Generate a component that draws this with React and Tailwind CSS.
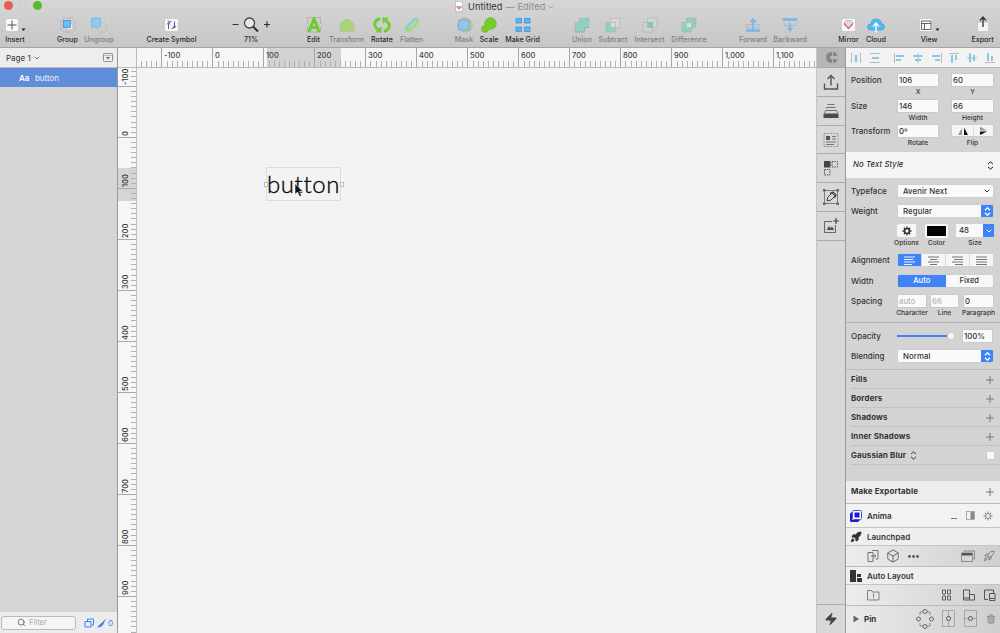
import { ChevronDown, Search, Plus, Rocket, Box, Zap, Trash2 } from "lucide-react";

const blue = "#3b82f0";

function Icon({ w = 16, h = 16, className = "", children }) {
    return <svg width={w} height={h} viewBox={`0 0 ${w} ${h}`} fill="none" className={`block shrink-0 ${className}`}>{children}</svg>
}

function Gear({ thin }) {
    return <Icon w={10} h={10}>
        <circle cx="5" cy="5" r="2.4" stroke="currentColor" strokeWidth={thin ? 0.9 : 1.5} />
        <path d="M5 .5v2M5 7.500v2M.5 5h2M7.500 5h2M1.800 1.800l1.400 1.400M6.800 6.800l1.400 1.400M8.200 1.800L6.800 3.200M3.200 6.800L1.800 8.200" stroke="currentColor" strokeWidth={thin ? 1 : 1.3} />
    </Icon>
}

function Tool({ label, className, dim, children }) {
    return <div className={`flex flex-col items-center shrink-0 whitespace-nowrap text-[7.1px] leading-[10px] font-medium ${dim ? "text-[#808080]" : "text-[#2a2a2a]"} ${className}`}>
        <div className="h-[18px] flex items-center justify-center">{children}</div>
        <div className="mt-[1px]">{label}</div>
    </div>
}

function Tile({ children }) {
    return <Icon w={15} h={16}>
        <rect x="0.5" y="1.5" width="14" height="13" rx="1.5" fill="#f7f7f7" stroke="#bdbdbd" strokeWidth=".6" />
        {children}
    </Icon>
}

// teal shape pairs used by the four boolean operations
function BoolIcon({ a, b, mid, union }) {
    return <Icon>
        <rect x="5.5" y="1" width="9.500" height="9.500" fill={b} stroke="#a9b3b0" strokeWidth=".6" />
        <rect x="1" y="5.5" width="9.500" height="9.500" fill={a} stroke="#a9b3b0" strokeWidth=".6" />
        <rect x="5.5" y="5.5" width="5" height="5" fill={mid} stroke={union ? "none" : "#a9b3b0"} strokeWidth=".5" />
        {union && <path d="M1 15h9.500v-4.500h4.500" stroke="#8fa9c4" strokeWidth=".8" />}
    </Icon>
}

function Toolbar() {
    return <div className="h-12 w-full bg-gradient-to-b from-[#d6d6d6] to-[#c6c6c6] border-b border-[#a5a5a5] flex flex-col overflow-hidden">
        <div className="h-4 flex items-start">
            <div className="flex w-[456px] pt-[1px] pl-[4px] gap-[5.500px]">
                <div className="size-[9px] rounded-full bg-[#e85c56]" />
                <div className="size-[9px] rounded-full border border-[#cacaca]" />
                <div className="size-[9px] rounded-full bg-[#55bd2e]" />
            </div>
            <div className="flex items-center h-[13px] text-[9.2px] text-[#333] whitespace-nowrap">
                <Icon w={8} h={11} className="-ml-[1px] mr-[5px]"><path d="M.5 .5h5l2 2v8h-7z" fill="#fff" stroke="#aaa" strokeWidth=".6" /><path d="M2 5h4l1 1-3 3-3-3z" fill="#c99" /></Icon>
                <span className="tracking-[0.1px]">Untitled</span>
                <span className="text-[#8b8b8b] ml-[3px] tracking-[0.1px]">— Edited</span>
                <ChevronDown size={8} className="ml-[2px] text-[#888]" />
            </div>
        </div>
        <div className="flex h-[30px]">
            <Tool label="Insert" className="w-[20px] ml-[5px]">
                <Icon w={26} h={16}>
                    <rect x="3.5" y="1.5" width="13" height="13" rx="2" fill="#f8f8f8" stroke="#bbb" strokeWidth=".6" />
                    <path d="M5.500 8h9M10 3.500v9" stroke="#555" />
                    <path d="M19.500 11.500h4l-2 2.500z" fill="#222" />
                </Icon>
            </Tool>
            <Tool label="Group" className="w-[21px] ml-[32px]">
                <Icon>
                    <rect x="1" y="1" width="14" height="14" stroke="#aaa" strokeWidth=".6" />
                    <rect x="6.500" y="6.500" width="6" height="6" fill="#eee" stroke="#bbb" strokeWidth=".6" />
                    <rect x="3.500" y="3.500" width="7" height="7" fill="#5ec1f7" stroke="#4188c9" strokeWidth=".7" />
                    <path d="M0 0h2v2H0zM14 0h2v2h-2zM0 14h2v2H0zM14 14h2v2h-2z" fill="#f4f4f4" stroke="#999" strokeWidth=".3" />
                </Icon>
            </Tool>
            <Tool label="Ungroup" dim className="w-[30px] ml-[6px]">
                <Icon className="-ml-[1px]">
                    <rect x="6" y="6" width="9" height="9" stroke="#aaa" strokeDasharray="2 1" strokeWidth=".7" />
                    <rect x="0.500" y="1" width="9" height="9" fill="#8dcaf1" stroke="#78ade0" strokeWidth=".7" />
                    <path d="M14 5h2v2h-2zM5 14h2v2H5zM14 14h2v2h-2z" fill="#e8e8e8" stroke="#aaa" strokeWidth=".3" />
                </Icon>
            </Tool>
            <Tool label="Create Symbol" className="w-[51px] ml-[32px]">
                <Tile>
                    <path d="M4.500 12V6.500Q4.500 4.500 7.500 4.500M10.500 4.500V9.500Q10.500 11.500 7.500 11.500" stroke="#405cb6" />
                    <path d="M3 7.500L4.500 5.500l1.500 2M9 9L10.500 11 12 9" stroke="#444" strokeWidth=".8" />
                    <path d="M3.500 4h2" stroke="#e26565" />
                </Tile>
            </Tool>
            <Tool label="71%" className="w-[40px] ml-[34px]">
                <Icon w={40} h={18}>
                    <path d="M1.500 8.500h6M33 8.500h6M36 5.500v6" stroke="#333" strokeWidth="1.200" />
                    <circle cx="18.500" cy="7" r="5" fill="#e8e8e8" stroke="#444" strokeWidth="1.300" />
                    <path d="M22 10.500l5 5" stroke="#333" strokeWidth="2" />
                </Icon>
            </Tool>
            <Tool label="Edit" className="w-[15px] ml-[35px]">
                <Icon>
                    <rect x="1.500" y=".5" width="13" height="14.500" stroke="#aaa" strokeWidth=".7" />
                    <path d="M2.800 15L8 1.500l5.200 13.500M5 10.500h6" stroke="#6fca27" strokeWidth="2.800" />
                    <path d="M.5 7h2v2h-2zM13.500 7h2v2h-2z" fill="#f4f4f4" stroke="#999" strokeWidth=".4" />
                </Icon>
            </Tool>
            <Tool label="Transform" dim className="w-[35px] ml-[8px]">
                <Icon><path d="M1 14.500V8Q1 6 3 6Q4 2.500 8 2.500T13 6Q15 6 15 8v6.500z" fill="#aad47a" stroke="#aab5a0" strokeWidth=".6" /></Icon>
            </Tool>
            <Tool label="Rotate" className="w-[22px] ml-[7px]">
                <Icon w={18} h={16}>
                    <path d="M7 1.500Q.5 4 2 9Q3 11.500 6 13" stroke="#74cc32" strokeWidth="3" />
                    <path d="M2 15.500h6.500V9z" fill="#74cc32" />
                    <path d="M11 14.500Q17.500 12 16 7Q15 4.500 12 3" stroke="#74cc32" strokeWidth="3" />
                    <path d="M16 .5H9.500V7z" fill="#74cc32" />
                </Icon>
            </Tool>
            <Tool label="Flatten" dim className="w-[23px] ml-[7px]">
                <Icon>
                    <path d="M4.500 11.500L11.500 4.500" stroke="#a9d683" strokeWidth="7.500" strokeLinecap="round" />
                    <path d="M.8 10.500L9 1.800Q12 -.3 14.200 1.800L6 10Q3 13 .8 10.500z" fill="#8ecfd2" />
                    <path d="M5 11l7-7" stroke="#d7ebd4" strokeWidth=".8" />
                </Icon>
            </Tool>
            <Tool label="Mask" dim className="w-[18px] ml-[32px]">
                <Icon w={17}><circle cx="9" cy="8" r="7.200" fill="#b4cf91" stroke="#9fad8e" strokeWidth=".6" /><rect x="2.500" y="3" width="10.500" height="10" rx="1" fill="#92c6ec" stroke="#6b9bd0" strokeWidth=".7" /></Icon>
            </Tool>
            <Tool label="Scale" className="w-[18px] ml-[7px]">
                <Icon><circle cx="9.500" cy="6.500" r="5.800" fill="#75cd29" stroke="#62ae28" strokeWidth=".6" /><circle cx="4" cy="12" r="3.400" fill="#75cd29" stroke="#62ae28" strokeWidth=".5" /><path d="M2 10L6 5l6 6-6 3z" fill="#75cd29" /></Icon>
            </Tool>
            <Tool label="Make Grid" className="w-[35px] ml-[7px]">
                <Icon><path d="M1 1.500h5.500v4.500h-5.500zM9.500 1.500h5.500v4.500h-5.500zM1 10h5.500v4.500h-5.500zM9.500 10h5.500v4.500h-5.500z" fill="#58b8f5" stroke="#3f8fdd" strokeWidth=".8" /></Icon>
            </Tool>
            <Tool label="Union" dim className="w-[20px] ml-[32px]"><BoolIcon a="#8fd1c0" b="#8fd1c0" mid="#8fd1c0" union /></Tool>
            <Tool label="Subtract" dim className="w-[30px] ml-[6px]"><BoolIcon a="#8fd1c0" b="#d6d6d6" mid="#d9d9d9" /></Tool>
            <Tool label="Intersect" dim className="w-[31px] ml-[6px]"><BoolIcon a="#d0d0d0" b="#d3d3d3" mid="#76c9c6" /></Tool>
            <Tool label="Difference" dim className="w-[36px] ml-[6px]"><BoolIcon a="#8fd1c0" b="#8fd1c0" mid="#dedede" /></Tool>
            <Tool label="Forward" dim className="w-[28px] ml-[32px]">
                <Icon><path d="M1 10V7.500h14V10M1 10.500h14" stroke="#aaa" strokeWidth=".6" /><rect x="1" y="12" width="14" height="3" fill="#7eb9ee" /><path d="M8 12V4" stroke="#7eb9ee" strokeWidth="2" /><path d="M4 5.500L8 .8l4 4.700z" fill="#7eb9ee" /></Icon>
            </Tool>
            <Tool label="Backward" dim className="w-[34px] ml-[6px]">
                <Icon><path d="M2 5.500v3h12v-3" stroke="#aaa" strokeWidth=".6" /><rect x=".5" y="1" width="15" height="3" fill="#7eb9ee" /><path d="M8 6v5" stroke="#7eb9ee" strokeWidth="2" /><path d="M4.500 10.500L8 15l3.500-4.500z" fill="#7eb9ee" /></Icon>
            </Tool>
            <Tool label="Mirror" className="w-[21px] ml-[31px]">
                <Tile><path d="M3 6l2-2.500h5L12 6l-4.500 5.500z" fill="#ddd" stroke="#999" strokeWidth=".6" /><path d="M3 6.500l4.500 5L12 6.500" stroke="#e06565" strokeWidth="1.200" /></Tile>
            </Tool>
            <Tool label="Cloud" className="w-[20px] ml-[7px]">
                <Icon w={18}>
                    <path d="M4 13Q.5 13 .5 10T4 7Q4 2 9 2T14 6Q17.500 7 17.500 10T14 13z" fill="#4ebbf6" stroke="#3b93d6" strokeWidth=".6" />
                    <path d="M9 15.500V7M6 9.500l3-3.500 3 3.500" stroke="#fff" strokeWidth="1.400" />
                </Icon>
            </Tool>
            <Tool label="View" className="w-[16px] ml-[35px]">
                <Icon w={26}>
                    <rect x="3.500" y="1.500" width="13" height="13" rx="1.500" fill="#f8f8f8" stroke="#bbb" strokeWidth=".6" />
                    <path d="M5.500 4h9.500v8.500h-9.500zM5.500 6.500h9.500M8.500 6.500V12" stroke="#555" strokeWidth=".9" />
                    <path d="M19.500 11.500h4l-2 2.500z" fill="#222" />
                </Icon>
            </Tool>
            <Tool label="Export" className="w-[23px] ml-[34px]">
                <Icon h={18}><rect x="2.500" y="6.500" width="11" height="9" fill="#f4f4f4" stroke="#bbb" strokeWidth=".5" /><path d="M8 11V1.500M5 4.500L8 1l3 3.500" stroke="#333" strokeWidth="1.300" /></Icon>
            </Tool>
        </div>
    </div>
}

function Layers() {
    return <div className="w-[118px] shrink-0 border-r border-[#999] bg-[#d5d5d5] flex flex-col">
        <div className="h-5 bg-[#ededed] border-b border-[#bbb] flex items-center pl-[6px] pr-[4px] text-[8px] text-[#333]">
            Page 1 <ChevronDown size={8} className="ml-[2px]" />
            <Icon w={10} h={9} className="ml-auto"><rect x=".5" y=".5" width="9" height="8" rx="1" stroke="#777" strokeWidth=".8" /><path d="M1 2.500h8" stroke="#999" strokeWidth=".6" /><path d="M3 4h4L5 6.500z" fill="#666" /></Icon>
        </div>
        <div className="h-[19px] bg-[#608dd9] text-white text-[8px] flex items-center pl-[19px] gap-[5.500px]">
            <span className="font-semibold">Aa</span><span className="text-[#eef4ff]">button</span>
        </div>
        <div className="flex-1" />
        <div className="h-[22px] bg-[#ececec] border-t border-[#d0d0d0] flex items-center pl-[1px]">
            <div className="w-[75px] h-[14px] rounded-[3px] border border-[#bbb] bg-[#f5f5f5] flex items-center pl-[15px] gap-[3px] text-[7.5px] text-[#aaa]">
                <Search size={9} className="text-[#555]" strokeWidth={2} />Filter
            </div>
            <Icon w={10} h={10} className="ml-[8px]"><path d="M3.500 3V1h6v6h-2M1 3.500h6v5.500H1z" stroke={blue} /></Icon>
            <Icon w={10} h={10} className="ml-[3px]"><path d="M.5 9.500Q1 7 3.500 6L9 .5 6 7Q4 9.500 .5 9.500z" fill={blue} /></Icon>
            <span className="text-[8px] ml-[1px] text-[#3b82f0]">0</span>
        </div>
    </div>
}

const marks = [-100, 0, 100, 200, 300, 400, 500, 600, 700, 800, 900, 1000, 1100]

// 51px per 100 units on both rulers
function TopRuler() {
    const ticks = Array.from({ length: 133 }, (_, i) => i)
    return <svg width="679" height="20" className="block bg-[#f6f6f6] font-[Inter,sans-serif]">
        <rect x="130" width="74" height="19" fill="#d2d2d2" />
        {ticks.map(i => <path key={i} d={`M${Math.round(4 + i * 5.1)}.5 13V19`} stroke="#b0b0b0" />)}
        {marks.map(m => {
            const x = Math.floor(75.3 + m * 0.5103)
            return <g key={m}>
                <path d={`M${x}.5 0V19`} stroke="#a6a6a6" />
                <text x={x + 3} y="10" fontSize="7.5" fontWeight="500" fill="#444">{m.toLocaleString("en-US")}</text>
            </g>
        })}
        <path d="M0 19.500H679" stroke="#b8b8b8" />
    </svg>
}

function SideRuler() {
    const ticks = Array.from({ length: 111 }, (_, i) => i)
    return <svg width="19" height="565" className="block shrink-0 bg-[#f6f6f6] font-[Inter,sans-serif]">
        <rect y="100" width="18" height="33" fill="#d5d5d5" />
        {ticks.map(i => <path key={i} d={`M13 ${Math.round(2.5 + i * 5.1)}.5H18`} stroke="#b0b0b0" />)}
        {marks.slice(0, 11).map(m => {
            const y = Math.round(69 + m * 0.51)
            return <g key={m}>
                <path d={`M0 ${y}.5H18`} stroke="#aaa" />
                <text transform={`translate(9.500 ${y - 1}) rotate(-90)`} fontSize="7.5" fontWeight="500" fill="#333">{m}</text>
            </g>
        })}
        <path d="M18.500 0V565" stroke="#c2c2c2" />
    </svg>
}

function Canvas() {
    return <div className="w-[698px] shrink-0 flex flex-col">
        <div className="flex">
            <div className="w-[19px] h-5 bg-[#f3f3f3] border-r border-b border-[#bbb]" />
            <TopRuler />
        </div>
        <div className="flex flex-1">
            <SideRuler />
            <div className="relative flex-1 bg-[#f3f3f3]">
                <div className="absolute left-[129px] top-[99px] w-[75px] h-[34px] border border-[#dcdcdc]">
                    <div className="absolute -left-[3px] top-[14px] w-[4px] h-[5px] border border-[#bbb] bg-white" />
                    <div className="absolute -right-[4px] top-[14px] w-[4px] h-[5px] border border-[#bbb] bg-white" />
                    <div className="absolute left-0 -top-[1px] h-[33px] leading-[33px] text-[24px] tracking-[0.6px] font-light text-black font-[Lato,sans-serif] [-webkit-text-stroke:0.35px_#111]">button</div>
                </div>
                <Icon w={10} h={15} className="absolute left-[157px] top-[115px]"><path d="M1 .5v11l2.500-2.500 2 4.500 2-1-2-4H9z" fill="#111" stroke="#fff" strokeWidth=".6" /></Icon>
            </div>
        </div>
    </div>
}

function SideTools() {
    const cell = "border-b border-[#aaa] flex items-center justify-center"
    return <div className="w-[30px] shrink-0 bg-[#d8d8d8] border-r border-[#999] border-l border-l-[#c5c5c5] flex flex-col">
        <div className={`h-5 bg-[#b7b7b7] ${cell}`}>
            <Icon w={11} h={11}><path d="M6 0v4H4.500v3H6v4Q0 11 0 5.500T6 0zM7 0q4 0 4 4H7zM7 7h4q0 4-4 4z" fill="#868686" /></Icon>
        </div>
        <div className={`h-[29px] ${cell}`}>
            <Icon><path d="M1.500 9.500V15h13V9.500M8 11.500V2M4.500 5L8 1.500 11.500 5" stroke="#555" strokeWidth="1.400" /></Icon>
        </div>
        <div className={`h-[29px] ${cell}`}>
            <Icon><path d="M4.500 1.500h7M3.500 4.500h9M3.500 4.500v1M2.500 7.500h11M2.500 7.500L1.500 10M13.500 7.500L14.500 10" stroke="#666" strokeWidth=".9" /><rect x=".5" y="10.500" width="15" height="4.500" fill="#4c4c4c" /></Icon>
        </div>
        <div className={`h-[28px] ${cell}`}>
            <Icon><rect x="1" y="1.500" width="14" height="13" stroke="#888" strokeDasharray="2 1" strokeWidth=".8" /><rect x="3" y="4" width="4" height="4" fill="#555" /><path d="M9 4.500h4M9 7h4M3 10h10M3 12.500h8" stroke="#777" /></Icon>
        </div>
        <div className={`h-[29px] ${cell}`}>
            <Icon><rect x="1" y="1" width="6.500" height="6.500" fill="#444" /><path d="M9 1.500h5.500v5.500H9zM1.500 9.500H7V15H1.500z" stroke="#555" strokeDasharray="1.500 1" /></Icon>
        </div>
        <div className={`h-[29px] ${cell}`}>
            <Icon><path d="M1.500 1.500h13v13h-13z" stroke="#666" strokeWidth=".8" /><path d="M4 12l.8-3.800L9 4l3 3-4.200 4.200z" stroke="#444" /><path d="M7 4.500L10 3l3 3-1.500 3" stroke="#444" strokeWidth="1.300" /><path d="M0 0h2.500v2.500H0zM13.500 0h2.500v2.500h-2.500zM0 13.500h2.500v2.500H0zM13.500 13.500h2.500v2.500h-2.500z" fill="#666" /></Icon>
        </div>
        <div className={`h-[29px] ${cell}`}>
            <Icon><path d="M9 3.500H1.500v11h11V7" stroke="#666" /><path d="M3.500 12l2.500-4 1.500 2L9 8.500l2.500 3.500z" fill="#555" /><path d="M13 0v6M10 3h6" stroke="#444" strokeWidth="1.200" /></Icon>
        </div>
        <div className="flex-1" />
        <div className="h-[29px] border-t border-[#aaa] flex items-center justify-center">
            <Zap size={14} fill="#444" stroke="#444" strokeWidth={1} />
        </div>
    </div>
}

function Input({ value, className = "w-[42px]" }) {
    return <div className={`h-[14px] bg-[#fafafa] border border-[#cacaca] text-[7.8px] leading-[13px] pl-[1px] ${className}`}>{value}</div>
}

function Field({ value, label, className = "w-[42px]" }) {
    return <div className={`shrink-0 flex flex-col items-center ${className}`}>
        <Input value={value} className="w-full" />
        <div className="text-[6.7px] leading-[10px] whitespace-nowrap text-[#333]">{label}</div>
    </div>
}

function Row({ label, className, children }) {
    return <div className={`flex items-start ${className}`}>
        <div className="w-[46px] shrink-0 leading-[15px]">{label}</div>
        {children}
    </div>
}

function UpDown({ className = "", w = 1.2 }) {
    return <Icon w={7} h={9} className={className}><path d="M1 3.200L3.500 .8 6 3.200M1 5.800L3.500 8.200 6 5.800" stroke="currentColor" strokeWidth={w} /></Icon>
}

function Select({ value, arrows }) {
    return <div className="w-[97px] h-[14px] rounded-[2px] bg-[#fafafa] border border-[#cfcfcf] flex items-center text-[7.8px] pl-[5px] overflow-hidden">
        <span className="pt-[1px] tracking-[0.1px]">{value}</span>
        {arrows
            ? <div className="ml-auto w-[12px] h-full bg-[#3e83f7] flex items-center justify-center text-white"><UpDown w={1.300} /></div>
            : <ChevronDown size={8} className="ml-auto mr-[2px]" strokeWidth={3} />}
    </div>
}

const alignIcons = [
    { line: "M1.500 1v10M10.500 1v10", bar: "M6 3v7", w: 2.5 },
    { line: "M1 1.500h10M1 10.500h10", bar: "M3 6h7", w: 2 },
    { line: "M1.500 1v10", bar: "M3 4h8M3 8h5", w: 2, gap: "ml-[5px]" },
    { line: "M6 1v10", bar: "M1.500 4h9M3 8h6", w: 2 },
    { line: "M10.500 1v10", bar: "M1 4h8M4 8h5", w: 2 },
    { line: "M1 1.500h10", bar: "M4 3v8M8 3v5", w: 2, gap: "-ml-[2px]" },
    { line: "M1 6h10", bar: "M4 1.500v9M8 3v6", w: 2, gap: "-ml-[1px]" },
    { line: "M1 10.500h10", bar: "M4 1v8M8 4v5", w: 2, gap: "-ml-[1px]" },
]

function AlignBar() {
    return <div className="h-5 bg-[#f3f3f3] border-b border-[#b8b8b8] flex items-center pl-[4px] gap-[7px]">
        {alignIcons.map((a, i) => <Icon key={i} w={12} h={12} className={a.gap}>
            <path d={a.line} stroke="#aaa" strokeWidth=".8" /><path d={a.bar} stroke="#8bc7e7" strokeWidth={a.w} />
        </Icon>)}
    </div>
}

function Lines({ d, on }) {
    return <div className={`flex-1 flex items-center justify-center border-r border-[#d8d8d8] last:border-0 ${on ? "bg-[#3e83f7]" : ""}`}>
        <Icon w={11} h={9}><path d={d} stroke={on ? "#fff" : "#666"} strokeWidth=".9" /></Icon>
    </div>
}

function Inspector() {
    const section = "h-[19px] border-b border-[#c2c2c2] flex items-center pt-[1px] pr-[5px] font-bold text-[7.9px] tracking-[0.15px]"
    return <div className="w-[154px] shrink-0 bg-[#d3d3d3] text-[#333] text-[8px] flex flex-col overflow-hidden">
        <AlignBar />
        <div className="h-[84px] pl-[5px] pt-[5px] flex flex-col font-medium">
            <Row label="Position" className="h-[26px]"><Field value="106" label="X" /><Field value="60" label="Y" className="w-[43px] ml-[12px]" /></Row>
            <Row label="Size" className="h-[25px]"><Field value="146" label="Width" /><Field value="66" label="Height" className="w-[43px] ml-[12px]" /></Row>
            <Row label="Transform" className="h-[27px]">
                <Field value="0º" label="Rotate" />
                <div className="w-[43px] ml-[12px] flex flex-col items-center">
                    <div className="w-full h-[13px] rounded-[2px] bg-[#f6f6f6] border border-[#ccc] flex justify-center items-center">
                        <Icon w={32} h={10}><path d="M1 9L5 2v7z" fill="#999" /><path d="M7 1.500v7.500h4z" fill="#111" /><path d="M16.500 0v10" stroke="#ccc" strokeWidth=".6" /><path d="M23 .5v4h7z" fill="#999" /><path d="M23 9V5.500h7z" fill="#111" /></Icon>
                    </div>
                    <div className="text-[6.7px] leading-[10px] mt-[1px]">Flip</div>
                </div>
            </Row>
        </div>
        <div className="h-[26px] bg-[#f5f5f5] flex items-center justify-between pl-[7px] pr-[6px] text-[7.8px] italic text-[#111] tracking-[0.1px]">
            No Text Style <UpDown w={1} />
        </div>
        <div className="h-[145px] pl-[5px] pt-[6px] border-b border-[#b5b5b5] font-medium">
            <Row label="Typeface" className="h-[20px]"><Select value="Avenir Next" /></Row>
            <Row label="Weight" className="h-[20px]"><Select value="Regular" arrows /></Row>
            <Row label="" className="h-[29px] text-[6.7px] text-center">
                <div className="w-[19px] flex flex-col items-center">
                    <div className="w-[19px] h-[13px] bg-[#f7f7f7] rounded-[2px] flex items-center justify-center"><Gear /></div>
                    <span className="leading-[10px] mt-[1px]">Options</span>
                </div>
                <div className="w-[23px] ml-[9px] flex flex-col items-center">
                    <div className="w-[23px] h-[14px] bg-black border-2 border-[#f8f8f8] rounded-[2px]" />
                    <span className="leading-[10px]">Color</span>
                </div>
                <div className="w-[38px] ml-[8px] flex flex-col items-center">
                    <div className="w-full h-[13px] bg-[#f9f9f9] flex items-center pl-[3px] text-[7.8px]">48<div className="ml-auto w-[11px] h-full bg-[#3e83f7] text-white flex items-center justify-center"><ChevronDown size={8} strokeWidth={3} /></div></div>
                    <span className="leading-[10px] mt-[1px]">Size</span>
                </div>
            </Row>
            <Row label="Alignment" className="h-[21px]">
                <div className="w-[97px] h-[14px] rounded-[2px] bg-[#f6f6f6] border border-[#cfcfcf] flex overflow-hidden">
                    <Lines on d="M0 1h11M0 3.500h9M0 6h11M0 8.500h8" />
                    <Lines d="M0 1h11M2 3.500h7M0 6h11M2 8.500h7" />
                    <Lines d="M0 1h11M2 3.500h9M0 6h11M3 8.500h8" />
                    <Lines d="M0 1h11M0 3.500h11M0 6h11M0 8.500h11" />
                </div>
            </Row>
            <Row label="Width" className="h-[20px]">
                <div className="w-[97px] h-[14px] rounded-[2px] bg-[#f8f8f8] border border-[#cfcfcf] flex overflow-hidden text-center text-[7.6px] leading-[12px]">
                    <div className="flex-1 bg-[#3e83f7] text-white">Auto</div><div className="flex-1">Fixed</div>
                </div>
            </Row>
            <Row label="Spacing" className="h-[27px]">
                <Field value={<span className="text-[#b5b5b5]">auto</span>} label="Character" className="w-[30px]" />
                <Field value={<span className="text-[#b5b5b5]">66</span>} label="Line" className="w-[29px] ml-[3px]" />
                <Field value="0" label="Paragraph" className="w-[31px] ml-[4px]" />
            </Row>
        </div>
        <div className="h-[47px] pl-[5px] pt-[6px] border-b border-[#bdbdbd] font-medium">
            <Row label="Opacity" className="h-[20px]">
                <div className="w-[58px] h-[13px] flex items-center"><div className="h-[2px] w-[50px] bg-[#3e83f7]" /><div className="size-[8px] rounded-full bg-[#f8f8f8] border border-[#ccc]" /></div>
                <Input value="100%" className="w-[31px] ml-[7px]" />
            </Row>
            <Row label="Blending"><Select value="Normal" arrows /></Row>
        </div>
        <div className="pl-[5px]">
            {["Fills", "Borders", "Shadows", "Inner Shadows"].map(s => <div key={s} className={section}>{s}<Plus size={12} className="ml-auto -mr-[1px] text-[#777]" /></div>)}
            <div className={section}>Gaussian Blur <UpDown w={1} className="ml-[4px]" /><div className="ml-auto size-[9px] rounded-[1px] bg-[#f8f8f8] border border-[#ccc]" /></div>
        </div>
        <div className="h-[16px]" />
        <div className="h-[23px] bg-[#ededed] border-b border-[#bbb] flex items-center pl-[5px] pr-[4px] font-bold text-[7.9px] tracking-[0.15px]">Make Exportable<Plus size={12} className="ml-auto text-[#777]" /></div>
        <div className="h-[24px] bg-[#f2f2f2] border-b border-[#c4c4c4] flex items-center pl-[4px] pr-[7px] font-semibold">
            <Icon w={12} h={12} className="mr-[5px]"><path d="M0 3.500L2 2v8h8l-2 2H1.500Q0 12 0 10.500z" fill="#2418d8" /><rect x="2.500" y=".5" width="9" height="9" rx="1" fill="#fff" stroke="#365cbf" /><rect x="4.500" y="2.500" width="5" height="5" fill="#2412e8" /></Icon>
            Anima
            <div className="ml-auto w-[6px] h-[1px] bg-[#777] mt-[6px]" />
            <Icon w={9} h={9} className="ml-[9px] mr-[8px]"><rect x=".5" y=".5" width="8" height="8" stroke="#999" strokeWidth=".8" /><path d="M4.500 1H8v7H4.500z" fill="#888" /></Icon>
            <div className="text-[#777]"><Gear thin /></div>
        </div>
        <div className="h-[18px] bg-[#efefef] border-b border-[#c4c4c4] flex items-center pl-[4px] font-semibold"><Rocket size={12} fill="#333" stroke="#333" className="mr-[5px]" />Launchpad</div>
        <div className="h-[21px] border-b border-[#bbb] bg-gradient-to-r from-[#ededed] to-[#cfcfcf] flex items-center pl-[21px] pr-[5px] text-[#777]">
            <Icon w={12} h={12}><path d="M3.500 2.500H1v9h5V9M5 .5h6v8.500H8.500M1 2.500h5V9M4 6h5M7.500 4.500L9 6 7.500 7.500" stroke="#666" strokeWidth=".9" /></Icon>
            <Box size={14} strokeWidth={1.8} className="ml-[7px]" />
            <Icon w={12} h={3} className="ml-[8px]"><circle cx="1.500" cy="1.500" r="1.400" fill="#555" /><circle cx="5.500" cy="1.500" r="1.400" fill="#555" /><circle cx="9.500" cy="1.500" r="1.400" fill="#555" /></Icon>
            <Icon w={14} h={12} className="ml-auto mr-[8px]"><path d="M3 2.500V1h10.500v8H12M.5 3h11v8.500H.5z" stroke="#777" strokeWidth=".8" /><path d="M1 3h10v2.500H1z" fill="#555" /></Icon>
            <Rocket size={12} strokeWidth={1.8} />
        </div>
        <div className="h-[18px] bg-[#efefef] border-b border-[#c4c4c4] flex items-center pl-[4px] font-semibold">
            <Icon w={12} h={12} className="mr-[5px]"><path d="M0 0h6v12H0zM7 4h4v3H7zM7 8h5v4H7z" fill="#333" /></Icon>Auto Layout
        </div>
        <div className="h-[21px] border-b border-[#bbb] bg-gradient-to-r from-[#ededed] to-[#cfcfcf] flex items-center pl-[21px] pr-[4px]">
            <Icon w={13} h={12}><path d="M.5 1.500h4l1 1.500h6.500v8h-11.500zM6.500 4.500v4M6.500 9.500v1" stroke="#777" strokeWidth=".9" /></Icon>
            <Icon w={9} h={12} className="ml-auto"><path d="M.5 1h3v4h-3zM5.500 1h3v4h-3zM.5 7h3v4h-3zM5.500 7h3v4h-3z" stroke="#555" strokeWidth=".9" /></Icon>
            <Icon w={12} h={12} className="ml-[12px]"><path d="M.5 1h6v10h-6zM6.500 5.500h5v5.500h-5zM.5 9h6" stroke="#555" /></Icon>
            <Icon w={12} h={12} className="ml-[9px]"><path d="M4 10.500H.5V1h9v3M5.500 4.500h5.500v7h-5.500zM5.500 9.500h5.500" stroke="#555" /></Icon>
        </div>
        <div className="h-[25px] shrink-0 bg-gradient-to-r from-[#eaeaea] to-[#cfcfcf] flex items-center pl-[7px] pr-[4px] font-bold">
            <Icon w={7} h={8} className="mr-[4px]"><path d="M.5 0.500L6 4 .5 7.500z" fill="#666" /></Icon>Pin
            <Icon w={18} h={20} className="ml-auto"><path d="M4 6V3h3M11 3h3v3M14 14v3h-3M7 17H4v-3" stroke="#777" strokeWidth=".8" /><circle cx="9" cy="2.500" r="2" stroke="#666" /><circle cx="9" cy="17.500" r="2" stroke="#666" /><circle cx="2.500" cy="10" r="2" stroke="#666" /><circle cx="15.500" cy="10" r="2" stroke="#666" /></Icon>
            <Icon w={13} h={17} className="ml-[8px]"><path d="M.5 .5h12v16H.5zM6.500 .5v6M6.500 10.500v6" stroke="#999" strokeWidth=".8" /><circle cx="6.500" cy="8.500" r="2" stroke="#555" /></Icon>
            <Icon w={13} h={17} className="ml-[9px]"><path d="M.5 .5h12v16H.5zM.5 8.500h4M8.500 8.500h4" stroke="#999" strokeWidth=".8" /><circle cx="6.500" cy="8.500" r="2" stroke="#555" /></Icon>
            <Trash2 size={10} fill="#aaa" className="ml-[9px] text-[#8c8c8c]" />
        </div>
        <div className="flex-1 bg-gradient-to-r from-[#eaeaea] to-[#cfcfcf]" />
    </div>
}

function App() {
    return <div className="w-[1000px] h-[633px] flex flex-col overflow-hidden font-[Inter,'Liberation_Sans',sans-serif] leading-none select-none">
        <Toolbar />
        <div className="flex flex-1">
            <Layers />
            <Canvas />
            <SideTools />
            <Inspector />
        </div>
    </div>
}

export default App;
